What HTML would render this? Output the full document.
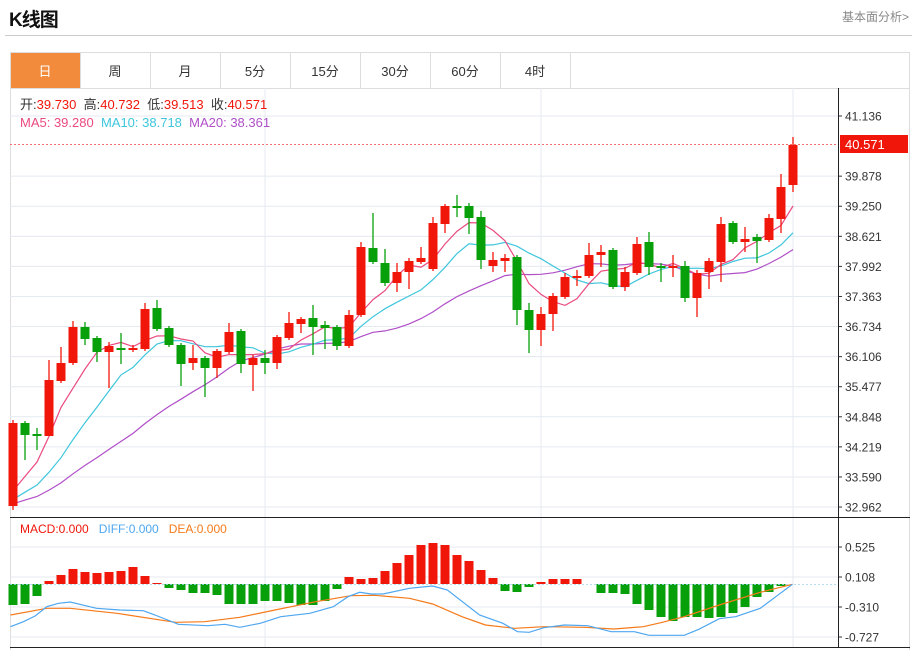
<!DOCTYPE html>
<html><head><meta charset="utf-8">
<style>
body{margin:0;background:#fff;width:916px;height:650px;overflow:hidden;font-family:"Liberation Sans","Noto Sans CJK SC",sans-serif;}
#t{position:absolute;left:9px;top:5px;font-size:19px;font-weight:bold;color:#111;letter-spacing:-1px}
#r{position:absolute;right:7px;top:8px;font-size:12px;color:#888}
#hl{position:absolute;left:5px;top:35px;width:907px;height:1px;background:#ccc}
svg{position:absolute;left:0;top:0}
</style></head><body>
<div id="t">K线图</div><div id="r">基本面分析&gt;</div><div id="hl"></div>
<svg id="s" width="916" height="650" xmlns="http://www.w3.org/2000/svg" font-family="Liberation Sans, Noto Sans CJK SC, sans-serif"></svg>
<script>
var S=document.getElementById('s'),h='';
h+='<rect x="10.5" y="52.5" width="899" height="600" fill="none" stroke="#ddd"/>';
h+='<rect x="11" y="53" width="69" height="35" fill="#f28c3c"/>';
var tabs=['日','周','月','5分','15分','30分','60分','4时'];
for(var i=0;i<tabs.length;i++){var x=10+70*i;
 h+='<line x1="'+(x+70.5)+'" y1="53" x2="'+(x+70.5)+'" y2="88" stroke="#ddd"/>';
 h+='<text x="'+(x+35)+'" y="76" font-size="13" text-anchor="middle" fill="'+(i?'#333':'#fff')+'">'+tabs[i]+'</text>';}
h+='<line x1="10" y1="88.5" x2="910" y2="88.5" stroke="#ddd"/>';
var lab=['41.136','40.507','39.878','39.250','38.621','37.992','37.363','36.734','36.106','35.477','34.848','34.219','33.590','32.962'];
for(var i=0;i<lab.length;i++){var y=116+i*30.08;if(i==1)continue;
 h+='<line x1="10" y1="'+y+'" x2="838" y2="'+y+'" stroke="#e4eaf0"/>';
 h+='<line x1="838" y1="'+y+'" x2="842" y2="'+y+'" stroke="#333"/>';
 h+='<text x="845" y="'+(y+4.5)+'" font-size="12" fill="#333">'+lab[i]+'</text>';}
[265,541,793].forEach(function(x){h+='<line x1="'+x+'" y1="88" x2="'+x+'" y2="648" stroke="#e4eaf0"/>';});
var ml=[[547,'0.525'],[577,'0.108'],[607,'-0.310'],[637,'-0.727']];
ml.forEach(function(m){h+='<line x1="10" y1="'+m[0]+'" x2="838" y2="'+m[0]+'" stroke="#e4eaf0"/><line x1="838" y1="'+m[0]+'" x2="842" y2="'+m[0]+'" stroke="#333"/><text x="845" y="'+(m[0]+4.5)+'" font-size="12" fill="#333">'+m[1]+'</text>';});
var C=[[506,423,420,510],[423,435,421,460],[434,436,428,450],[436,380,360,436],[381,363,347,383],[363,327,321,365],[327,339,322,345],[338,352,336,362],[352,346,342,388],[348,348,333,364],[350,348,345,352],[349,309,303,351],[308,329,300,331],[328,345,326,347],[345,364,343,386],[363,358,345,370],[358,368,356,397],[368,351,349,378],[352,332,323,354],[331,364,329,373],[365,358,355,391],[358,363,350,374],[363,337,335,369],[338,323,312,340],[324,319,317,333],[318,327,305,355],[325,328,321,349],[327,346,325,350],[346,315,310,348],[315,247,242,317],[248,262,213,264],[263,283,249,286],[283,272,263,292],[272,261,258,289],[262,258,247,264],[269,223,217,271],[224,206,204,233],[206,208,195,217],[206,218,203,234],[217,260,211,269],[266,260,252,272],[261,258,254,272],[257,310,255,325],[310,330,303,353],[330,314,307,346],[314,296,293,331],[297,277,273,299],[277,276,270,286],[276,255,243,278],[255,252,245,267],[250,287,248,289],[287,272,267,291],[273,244,237,275],[242,267,232,275],[266,268,263,282],[267,266,255,277],[266,298,261,302],[298,273,270,317],[272,261,258,289],[262,224,217,282],[223,242,221,244],[242,239,227,252],[237,241,234,263],[240,218,214,242],[219,187,174,233],[185,145,137,192]];
var cl=C.map(function(c){return c[1];});
function ma(n){var p=[],a=[];for(var i=0;i<19;i++)a.push(508);a=a.concat(cl);
 for(var i=0;i<cl.length;i++){var s=0;for(var k=0;k<n;k++)s+=a[19+i-k];p.push((13+12*i)+','+(s/n).toFixed(1));}return p.join(' ');}
h+='<polyline points="'+ma(20)+'" fill="none" stroke="#b04fc8" stroke-width="1.2"/>';
h+='<polyline points="'+ma(10)+'" fill="none" stroke="#3ec6dc" stroke-width="1.2"/>';
h+='<polyline points="'+ma(5)+'" fill="none" stroke="#ea4a7f" stroke-width="1.2"/>';
for(var i=0;i<C.length;i++){var c=C[i],x=13+12*i,up=c[1]<c[0]||(c[1]==c[0]&&i!=9),col=up?'#f1160a':'#07a00b';
 var t=Math.min(c[0],c[1]),b=Math.max(c[0],c[1]);if(b-t<2)b=t+2;
 h+='<line x1="'+x+'" y1="'+c[2]+'" x2="'+x+'" y2="'+c[3]+'" stroke="'+col+'" stroke-width="1.3"/>';
 h+='<rect x="'+(x-4.5)+'" y="'+t+'" width="9" height="'+(b-t)+'" fill="'+col+'"/>';}
h+='<line x1="10" y1="144.5" x2="838" y2="144.5" stroke="#f37070" stroke-dasharray="2,2"/>';
h+='<rect x="840" y="135" width="68" height="18" fill="#f1160a"/><text x="845" y="149" font-size="13" fill="#fff">40.571</text>';
h+='<text x="20" y="109" font-size="13" fill="#333" xml:space="preserve">开:<tspan fill="#f1160a">39.730</tspan>  高:<tspan fill="#f1160a">40.732</tspan>  低:<tspan fill="#f1160a">39.513</tspan>  收:<tspan fill="#f1160a">40.571</tspan></text>';
h+='<text x="20" y="127" font-size="13" fill="#ea4a7f" xml:space="preserve">MA5: 39.280  <tspan fill="#3ec6dc">MA10: 38.718</tspan>  <tspan fill="#b04fc8">MA20: 38.361</tspan></text>';
h+='<text x="20" y="533" font-size="12" fill="#f1160a" xml:space="preserve">MACD:0.000   <tspan fill="#4ea7f0">DIFF:0.000</tspan>   <tspan fill="#f57a1a">DEA:0.000</tspan></text>';
var M=[-21,-20,-12,3,9,15,12,11,12,13,17,8,1,-4,-6,-9,-9,-11,-20,-20,-20,-17,-17,-19,-21,-21,-17,-5,7,5,6,13,21,29,39,41,39,29,23,14,6,-7,-8,-3,2,5,5,5,0,-9,-9,-10,-20,-26,-33,-37,-33,-33,-34,-33,-29,-23,-13,-8,-2,0];
for(var i=0;i<M.length;i++){var x=13+12*i,v=M[i];if(!v)continue;
 h+='<rect x="'+(x-4.5)+'" y="'+(v>0?584-v:584)+'" width="9" height="'+Math.abs(v)+'" fill="'+(v>0?'#f1160a':'#07a00b')+'"/>';}
h+='<line x1="10" y1="584.5" x2="838" y2="584.5" stroke="#9fd6ec" stroke-dasharray="2,2" opacity="0.8"/>';
function pl(a){return a.map(function(p){return (p[0]/1.71).toFixed(1)+','+(400+p[1]/3).toFixed(1);}).join(' ');}
var D=[[18,680],[40,665],[60,648],[80,620],[100,610],[120,606],[165,625],[205,630],[245,632],[265,645],[305,673],[355,677],[385,673],[410,682],[445,670],[480,650],[530,640],[570,620],[595,590],[615,577],[635,582],[655,582],[700,565],[740,558],[765,570],[820,645],[860,670],[885,695],[905,697],[930,683],[965,675],[1005,677],[1045,695],[1085,695],[1110,706],[1170,706],[1195,688],[1230,656],[1258,650],[1300,625],[1355,553]];
var E=[[18,645],[80,625],[120,625],[200,640],[300,667],[350,665],[410,652],[470,630],[540,605],[600,587],[640,586],[700,595],[740,612],[790,650],[830,675],[880,685],[930,680],[1000,682],[1050,687],[1100,680],[1130,668],[1170,650],[1230,615],[1300,577],[1355,553]];
h+='<polyline points="'+pl(E)+'" fill="none" stroke="#f57a1a" stroke-width="1.2"/>';
h+='<polyline points="'+pl(D)+'" fill="none" stroke="#4ea7f0" stroke-width="1.2"/>';
h+='<line x1="10" y1="517.5" x2="910" y2="517.5" stroke="#222"/>';
h+='<line x1="10" y1="647.5" x2="910" y2="647.5" stroke="#222"/>';
h+='<line x1="838.5" y1="88" x2="838.5" y2="648" stroke="#222"/>';
S.innerHTML=h;
</script>
</body></html>
